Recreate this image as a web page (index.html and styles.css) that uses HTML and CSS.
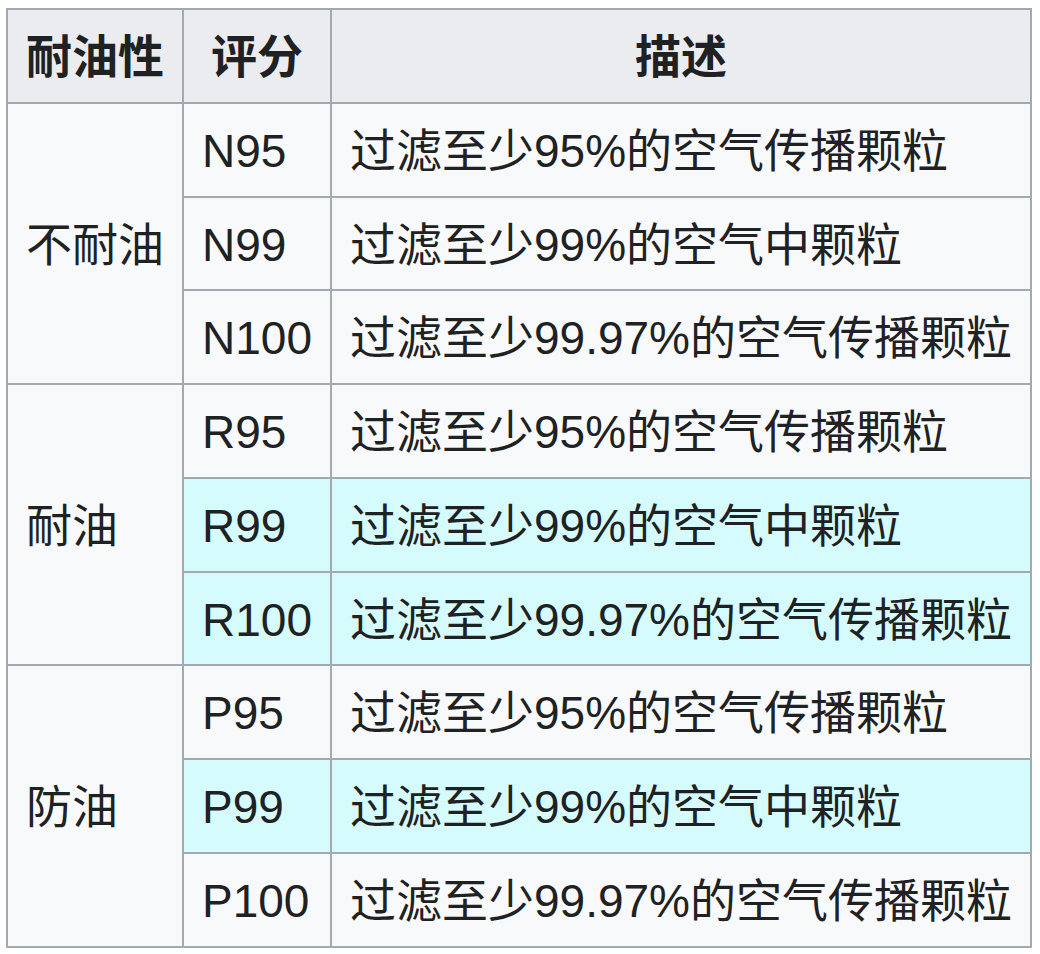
FILE: index.html
```html
<!DOCTYPE html>
<html lang="zh-CN">
<head>
<meta charset="utf-8">
<title>耐油性</title>
<link rel="stylesheet" href="styles.css">
</head>
<body>
<table class="wikitable">
  <thead>
    <tr><th>耐油性</th><th>评分</th><th>描述</th></tr>
  </thead>
  <tbody>
    <tr><td rowspan="3">不耐油</td><td>N95</td><td>过滤至少95%的空气传播颗粒</td></tr>
    <tr><td>N99</td><td>过滤至少99%的空气中颗粒</td></tr>
    <tr><td>N100</td><td>过滤至少99.97%的空气传播颗粒</td></tr>
    <tr><td rowspan="3">耐油</td><td>R95</td><td>过滤至少95%的空气传播颗粒</td></tr>
    <tr class="hl"><td>R99</td><td>过滤至少99%的空气中颗粒</td></tr>
    <tr class="hl"><td>R100</td><td>过滤至少99.97%的空气传播颗粒</td></tr>
    <tr><td rowspan="3">防油</td><td>P95</td><td>过滤至少95%的空气传播颗粒</td></tr>
    <tr class="hl"><td>P99</td><td>过滤至少99%的空气中颗粒</td></tr>
    <tr><td>P100</td><td>过滤至少99.97%的空气传播颗粒</td></tr>
  </tbody>
</table>
</body>
</html>
```
FILE: styles.css
```css
html, body {
  margin: 0;
  padding: 0;
  background: #ffffff;
}
body {
  padding: 8px 0 0 6px;
  font-family: "Liberation Sans", "Noto Sans CJK SC", sans-serif;
  color: #202122;
}
.wikitable {
  border-collapse: collapse;
  border: 2px solid #a2a9b1;
  background: #f8f9fa;
  font-size: 46px;
  line-height: 1.6;
}
.wikitable th,
.wikitable td {
  border: 2px solid #a2a9b1;
  padding: 11px 18px 7.2px;
  text-align: left;
  vertical-align: middle;
}
.wikitable th {
  background: #eaecf0;
  font-weight: bold;
  text-align: center;
}
.wikitable tr.hl td {
  background: #d5fbfd;
}
```
